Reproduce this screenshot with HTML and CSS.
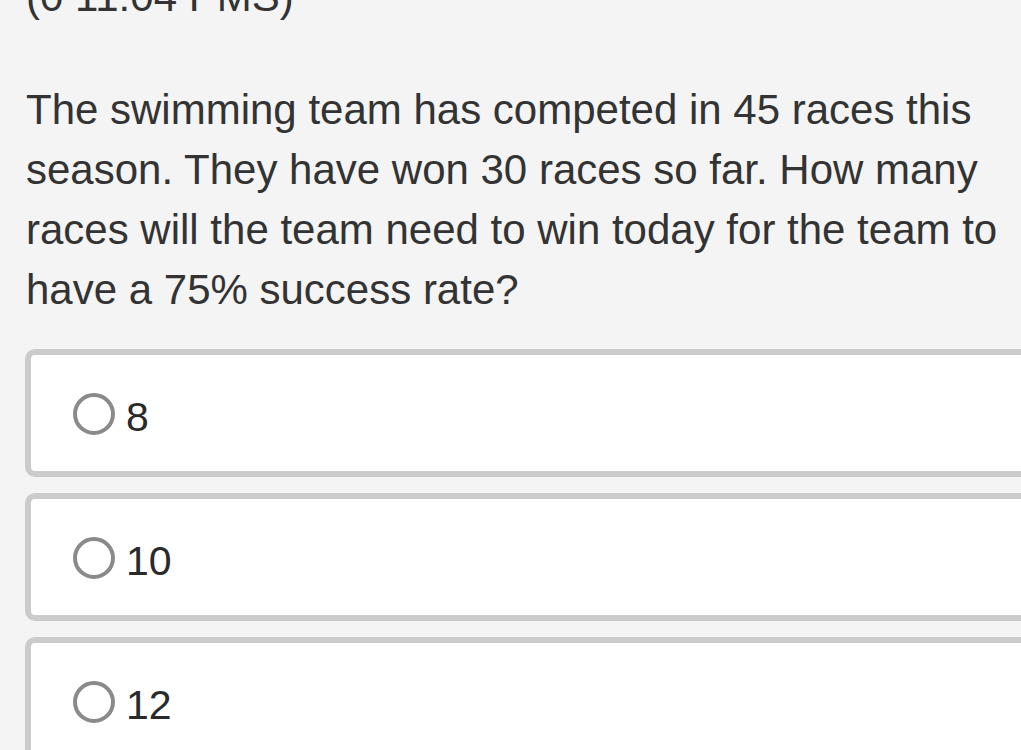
FILE: index.html
```html
<!DOCTYPE html>
<html lang="en">
<head>
<meta charset="utf-8">
<title>Question</title>
<link rel="stylesheet" href="styles.css">
</head>
<body>
<div class="page">
  <div class="meta">(0 11:04 PMS)</div>
  <p class="question">The swimming team has competed in 45 races this season. They have won 30 races so far. How many races will the team need to win today for the team to have a 75% success rate?</p>
  <div class="options">
    <label class="option"><span class="radio"></span><span class="label">8</span></label>
    <label class="option"><span class="radio"></span><span class="label">10</span></label>
    <label class="option"><span class="radio"></span><span class="label">12</span></label>
  </div>
</div>
</body>
</html>
```

FILE: styles.css
```css
html, body {
  margin: 0;
  padding: 0;
  overflow: hidden;
  background: #f4f4f4;
}
body {
  width: 1021px;
  height: 750px;
  font-family: "Liberation Sans", Arial, sans-serif;
  color: #333333;
}
.page {
  padding-left: 26px;
}
.meta {
  font-size: 42px;
  line-height: 60px;
  margin-top: -33px;
}
.question {
  font-size: 42px;
  line-height: 60px;
  margin: 53px 0 0 0;
}
.options {
  display: flex;
  flex-direction: column;
  gap: 16px;
  margin-top: 29px;
  margin-left: -1px;
  width: 1100px;
}
.option {
  box-sizing: border-box;
  height: 128px;
  background: #ffffff;
  border: 6px solid #cbcbcb;
  border-radius: 10px;
  display: flex;
  align-items: center;
  padding: 8px 0 0 42px;
}
.radio {
  box-sizing: border-box;
  width: 42px;
  height: 42px;
  margin-top: -6px;
  border: 4.5px solid #8a8a8a;
  border-radius: 50%;
  flex: none;
}
.label {
  font-size: 41px;
  margin-left: 11px;
  color: #2a2a2a;
  line-height: 1;
}
```
